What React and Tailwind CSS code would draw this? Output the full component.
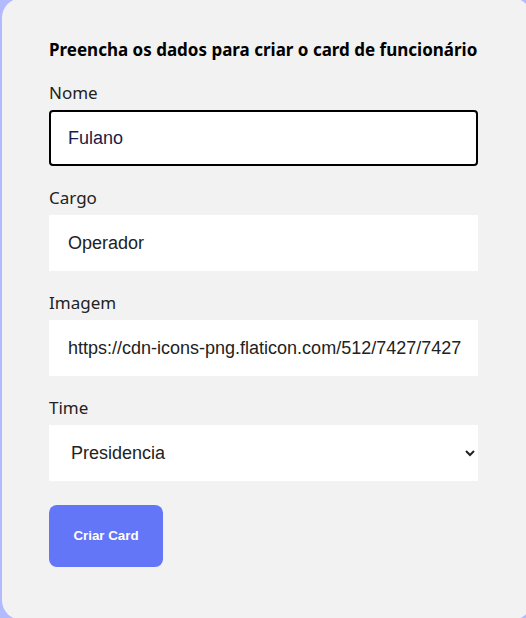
const labelCls = "text-[17px] leading-[24px] text-[#222] font-['Noto_Sans',sans-serif]";
const fieldCls = "mt-[5px] w-[429px] h-[56px] bg-white text-[18px] text-[#222] outline-none font-['Liberation_Sans',Arial,sans-serif]";

export default function App() {
  return (
    <div className="w-[526px] h-[618px] overflow-hidden bg-[#b3bbff] pl-[2px]">
      <div className="-mt-[2px] w-[530px] h-[622px] rounded-[20px] bg-[#f2f2f2] pl-[47px] pt-[40px] flex flex-col">
        <h2 className="text-[17px] leading-[24px] font-bold text-black font-['Noto_Sans',sans-serif]">
          Preencha os dados para criar o card de funcionário
        </h2>
        <form className="flex flex-col items-start mt-[19px]" onSubmit={(e) => e.preventDefault()}>
          <label className={labelCls}>Nome</label>
          <input
            defaultValue="Fulano"
            className="mt-[5px] w-[429px] h-[56px] bg-white rounded-[4px] border-2 border-black pl-[17px] text-[18px] text-[#1b1b4a] outline-none font-['Liberation_Sans',Arial,sans-serif]"
          />
          <label className={"mt-[20px] " + labelCls}>Cargo</label>
          <input defaultValue="Operador" className={fieldCls + " pl-[19px]"} />
          <label className={"mt-[20px] " + labelCls}>Imagem</label>
          <input
            defaultValue="https://cdn-icons-png.flaticon.com/512/7427/7427"
            className={fieldCls + " pl-[19px] pr-[10px]"}
          />
          <label className={"mt-[20px] " + labelCls}>Time</label>
          <select defaultValue="Presidencia" className={fieldCls + " pl-[18px] pr-[8px]"}>
            <option>Presidencia</option>
          </select>
          <button
            type="submit"
            className="mt-[24px] w-[114px] h-[62px] rounded-[8px] bg-[#6476f8] text-white font-bold text-[13.33px] font-['Liberation_Sans',Arial,sans-serif]"
          >
            Criar Card
          </button>
        </form>
      </div>
    </div>
  );
}
